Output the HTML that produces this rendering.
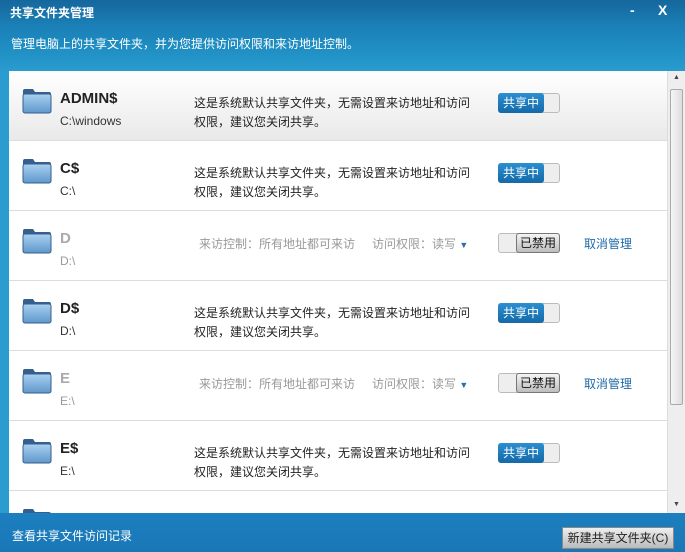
<!DOCTYPE html>
<html><head><meta charset="utf-8"><style>
*{margin:0;padding:0;box-sizing:border-box}
body{width:685px;height:552px;overflow:hidden;font-family:"Liberation Sans","Noto Sans CJK SC",sans-serif;font-size:12px;background:linear-gradient(180deg,#15679c 0,#1a7fb6 25px,#1f8fc4 50px,#2a9ccf 72px);position:relative}
.title{position:absolute;left:10px;top:4px;color:#fff;font-size:12px;font-weight:bold}
.ctl{position:absolute;top:2px;color:#fff;font-size:14px;font-weight:bold}
.sub{position:absolute;left:11px;top:35px;color:#fff;font-size:12px}
.panel{position:absolute;left:9px;top:71px;width:676px;height:442px;background:#fff;overflow:hidden}
.row{position:absolute;left:0;width:658px;height:70px;border-bottom:1px solid #dcdcdc;background:#fff}
.row.first{background:linear-gradient(180deg,#fff,#e9e9e9)}
.fold{position:absolute;left:13px;top:17px;width:30px;height:26px}
.name{position:absolute;left:51px;top:19px;font-size:15px;font-weight:bold;color:#222}
.path{position:absolute;left:51px;top:43px;font-size:12px;color:#333}
.dis .name{color:#aaa}.dis .path{color:#999}
.desc{position:absolute;left:185px;top:23px;font-size:12px;line-height:19px;color:#222}
.tog{position:absolute;left:489px;top:22px;width:62px;height:20px;border:1px solid #bbb;border-radius:3px;background:#eee}
.tog .on{position:absolute;left:-1px;top:-1px;width:46px;height:20px;background:linear-gradient(#2b8fd0,#1569a8);color:#fff;border-radius:3px;text-align:center;line-height:20px;font-size:12px}
.tog .off{position:absolute;right:-1px;top:-1px;width:44px;height:20px;background:linear-gradient(#f4f4f4,#bdbdbd);border:1px solid #777;color:#111;border-radius:3px;text-align:center;line-height:18px;font-size:12px}
.ctrl{position:absolute;left:190px;top:24px;color:#999}
.perm{position:absolute;left:363px;top:24px;color:#999}
.perm b{color:#2a6fb0;font-size:9px}
.cancel{position:absolute;left:575px;top:24px;color:#1f6aa8}
.sb{position:absolute;left:658px;top:0;width:18px;height:442px;background:#eee;border-left:1px solid #ddd}
.thumb{position:absolute;left:2px;top:18px;width:13px;height:316px;border:1px solid #aaa;border-radius:2px;background:linear-gradient(90deg,#f6f6f6,#ddd)}
.foot{position:absolute;left:0;top:513px;width:685px;height:39px;background:linear-gradient(#1c7fbf,#1a77b6)}
.foot span{position:absolute;left:12px;top:14px;color:#fff}
.btn{position:absolute;left:562px;top:527px;width:112px;height:22px;background:linear-gradient(#eee,#bbb);border:1px solid #888;color:#222;text-align:center;line-height:20px}
</style></head><body>
<div class="title">共享文件夹管理</div>
<div class="ctl" style="left:630px">-</div><div class="ctl" style="left:658px">X</div>
<div class="sub">管理电脑上的共享文件夹，并为您提供访问权限和来访地址控制。</div>
<div class="panel">
<svg width="0" height="0" style="position:absolute"><defs><linearGradient id="g" x1="0" y1="0" x2="0" y2="1"><stop offset="0" stop-color="#a9d0f0"/><stop offset="1" stop-color="#5f97cc"/></linearGradient></defs></svg>

<div class="row first" style="top:0"><svg class="fold" viewBox="0 0 30 26"><path d="M1 3Q1 1 3 1h8l2 3h14q2 0 2 2v18H1z" fill="#365f8e"/><rect x="1" y="6" width="28" height="19" rx="2" fill="url(#g)" stroke="#365f8e"/></svg><div class="name">ADMIN$</div><div class="path">C:\windows</div><div class="desc">这是系统默认共享文件夹，无需设置来访地址和访问<br>权限，建议您关闭共享。</div><div class="tog"><div class="on">共享中</div></div></div>

<div class="row" style="top:70px"><svg class="fold" viewBox="0 0 30 26"><path d="M1 3Q1 1 3 1h8l2 3h14q2 0 2 2v18H1z" fill="#365f8e"/><rect x="1" y="6" width="28" height="19" rx="2" fill="url(#g)" stroke="#365f8e"/></svg><div class="name">C$</div><div class="path">C:\</div><div class="desc">这是系统默认共享文件夹，无需设置来访地址和访问<br>权限，建议您关闭共享。</div><div class="tog"><div class="on">共享中</div></div></div>

<div class="row dis" style="top:140px"><svg class="fold" viewBox="0 0 30 26"><path d="M1 3Q1 1 3 1h8l2 3h14q2 0 2 2v18H1z" fill="#365f8e"/><rect x="1" y="6" width="28" height="19" rx="2" fill="url(#g)" stroke="#365f8e"/></svg><div class="name">D</div><div class="path">D:\</div><div class="ctrl">来访控制：所有地址都可来访</div><div class="perm">访问权限：读写 <b>▼</b></div><div class="tog"><div class="off">已禁用</div></div><div class="cancel">取消管理</div></div>

<div class="row" style="top:210px"><svg class="fold" viewBox="0 0 30 26"><path d="M1 3Q1 1 3 1h8l2 3h14q2 0 2 2v18H1z" fill="#365f8e"/><rect x="1" y="6" width="28" height="19" rx="2" fill="url(#g)" stroke="#365f8e"/></svg><div class="name">D$</div><div class="path">D:\</div><div class="desc">这是系统默认共享文件夹，无需设置来访地址和访问<br>权限，建议您关闭共享。</div><div class="tog"><div class="on">共享中</div></div></div>

<div class="row dis" style="top:280px"><svg class="fold" viewBox="0 0 30 26"><path d="M1 3Q1 1 3 1h8l2 3h14q2 0 2 2v18H1z" fill="#365f8e"/><rect x="1" y="6" width="28" height="19" rx="2" fill="url(#g)" stroke="#365f8e"/></svg><div class="name">E</div><div class="path">E:\</div><div class="ctrl">来访控制：所有地址都可来访</div><div class="perm">访问权限：读写 <b>▼</b></div><div class="tog"><div class="off">已禁用</div></div><div class="cancel">取消管理</div></div>

<div class="row" style="top:350px"><svg class="fold" viewBox="0 0 30 26"><path d="M1 3Q1 1 3 1h8l2 3h14q2 0 2 2v18H1z" fill="#365f8e"/><rect x="1" y="6" width="28" height="19" rx="2" fill="url(#g)" stroke="#365f8e"/></svg><div class="name">E$</div><div class="path">E:\</div><div class="desc">这是系统默认共享文件夹，无需设置来访地址和访问<br>权限，建议您关闭共享。</div><div class="tog"><div class="on">共享中</div></div></div>

<div class="row" style="top:420px"><svg class="fold" viewBox="0 0 30 26"><path d="M1 3Q1 1 3 1h8l2 3h14q2 0 2 2v18H1z" fill="#365f8e"/><rect x="1" y="6" width="28" height="19" rx="2" fill="url(#g)" stroke="#365f8e"/></svg></div>

<div class="sb"><div style="position:absolute;left:5px;top:3px;font-size:7px;color:#444">▲</div><div class="thumb"></div><div style="position:absolute;left:5px;top:430px;font-size:7px;color:#444">▼</div></div>
</div>
<div class="foot"><span>查看共享文件访问记录</span></div>
<div class="btn">新建共享文件夹(C)</div>
</body></html>
